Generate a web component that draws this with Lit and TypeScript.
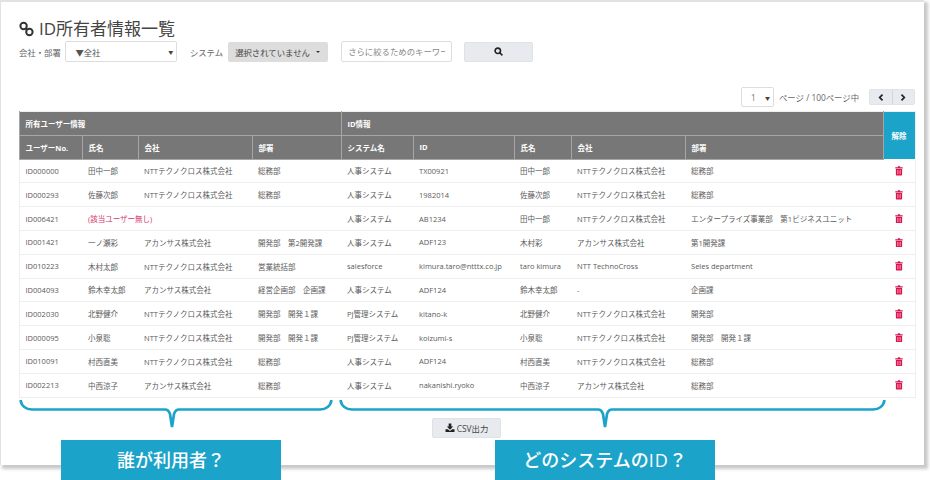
import { LitElement, html, css, svg } from "lit";
import { customElement } from "lit/decorators.js";

const NTT = "NTTテクノクロス株式会社";
const AK = "アカンサス株式会社";
const HR = "人事システム";
const PJ = "PJ管理システム";
type Row = string[];
const rows: Row[] = [
  ["ID000000", "田中一郎", NTT, "総務部", HR, "TX00921", "田中一郎", NTT, "総務部"],
  ["ID000293", "佐藤次郎", NTT, "総務部", HR, "1982014", "佐藤次郎", NTT, "総務部"],
  ["ID006421", "", "", "", HR, "AB1234", "田中一郎", NTT, "エンタープライズ事業部　第1ビジネスユニット"],
  ["ID001421", "一ノ瀬彩", AK, "開発部　第2開発課", HR, "ADF123", "木村彩", AK, "第1開発課"],
  ["ID010223", "木村太郎", NTT, "営業統括部", "salesforce", "kimura.taro@ntttx.co.jp", "taro kimura", "NTT TechnoCross", "Seles department"],
  ["ID004093", "鈴木幸太郎", AK, "経営企画部　企画課", HR, "ADF124", "鈴木幸太郎", "-", "企画課"],
  ["ID002030", "北野健介", NTT, "開発部　開発１課", PJ, "kitano-k", "北野健介", NTT, "開発部"],
  ["ID000095", "小泉聡", NTT, "開発部　開発１課", PJ, "koizumi-s", "小泉聡", NTT, "開発部　開発１課"],
  ["ID010091", "村西直美", NTT, "総務部", HR, "ADF124", "村西直美", NTT, "総務部"],
  ["ID002213", "中西涼子", AK, "総務部", HR, "nakanishi.ryoko", "中西涼子", AK, "総務部"],
];
const widths = [63, 56, 114, 89, 72, 101, 57, 114, 198, 32];

const trash = svg`<svg class="trash" viewBox="0 0 10 12" width="8" height="9.6"><path fill="#d9134f" d="M3.4 1.6 L3.9.3 H6.1 L6.6 1.6 H9.6 V3.1 H.4 V1.6 Z M1.1 3.7 H8.9 V11 Q8.9 11.8 8.1 11.8 H1.9 Q1.1 11.8 1.1 11 Z"/><path fill="#ee7fa0" d="M2.7 5h1.1v5.3H2.7zM4.45 5h1.1v5.3H4.45zM6.2 5h1.1v5.3H6.2z"/></svg>`;

const brace = (w: number, tip: number) => {
  const h = 31;
  return svg`<svg width=${w} height=${h} viewBox="0 0 ${w} ${h}"><path fill="none" stroke="#1ca3c9" stroke-width="2.7" d="M1.5 0 C2.5 6 7 9.5 13 9.5 H${tip - 7} C${tip - 4} 9.5 ${tip - 3} 11 ${tip - 2} 14 L${tip} 27 L${tip + 2} 14 C${tip + 3} 11 ${tip + 4} 9.5 ${tip + 7} 9.5 H${w - 13} C${w - 7} 9.5 ${w - 2.5} 6 ${w - 1.5} 0"/></svg>`;
};

@customElement("app-root")
export class AppRoot extends LitElement {
  static styles = css`
    :host { display: block; position: relative; width: 930px; height: 480px; overflow: hidden; background: #fff;
      font-family: "Open Sans", "Noto Sans CJK JP", sans-serif; color: #555; }
    .panel { box-sizing: border-box; width: 924px; height: 465px; background: #fff; border: solid #e2e2e2; border-width: 2px 0 0 1px;
      box-shadow: 3px 3px 3px 1px #c9c9c9; padding: 15px 9px 0 17.5px; display: flex; flex-direction: column; }
    h1 { margin: 0; height: 24px; padding-left: 0.5px; display: flex; align-items: center; gap: 5px; font-size: 17px; font-weight: 400; color: #444; line-height: 24px; }
    .filters { height: 21px; padding-left: 0.5px; display: flex; align-items: center; font-size: 8.4px; color: #666; }
    .sel { box-sizing: border-box; height: 21px; border: 1px solid #ddd; border-radius: 2px; background: #fff; display: flex; align-items: center; justify-content: space-between; }
    .sel.company { width: 112px; margin-left: 4.5px; padding: 0 3px 0 9px; color: #555; }
    .arrow { font-size: 5px; color: #444; }
    .sys-label { margin-left: 12.5px; }
    .multi { box-sizing: border-box; width: 100px; height: 20px; margin-left: 5px; background: #ddd; border: 0; border-radius: 2px; font: inherit; color: #444;
      display: flex; align-items: center; gap: 6px; padding: 0 0 0 7px; }
    .caret { width: 0; height: 0; border: 2.5px solid transparent; border-top-color: #333; border-bottom: 0; }
    input { box-sizing: border-box; width: 111px; height: 21px; margin-left: 13px; border: 1px solid #ddd; border-radius: 2px; padding: 0 6px; font: inherit; outline: none; background: #fff; }
    input::placeholder { color: #888; opacity: 1; }
    .search { box-sizing: border-box; width: 69px; height: 20px; margin-left: 12px; background: #e7eaee; border: 1px solid #dfe2e6; border-radius: 2px; display: flex; align-items: center; justify-content: center; padding: 0; }
    .pager { margin-top: 25px; height: 20px; display: flex; align-items: center; justify-content: flex-end; font-size: 8.4px; color: #666; }
    .sel.page { width: 33px; height: 20px; padding: 0 3px 0 9px; color: #777; }
    .pager-text { margin-left: 5px; width: 81px; }
    .nav { margin-left: 9px; width: 46px; height: 16px; display: flex; background: #e7eaee; border: 1px solid #dfe2e6; border-radius: 2px; box-sizing: border-box; }
    .nav span { flex: 1; display: flex; align-items: center; justify-content: center; }
    .nav span + span { border-left: 1px solid #d3d6da; }
    table { margin-top: 4px; width: 896px; table-layout: fixed; border-collapse: collapse; font-size: 7.5px; border: 1px solid #eee; }
    th { background: #777; color: #fff; font-weight: 700; text-align: left; padding: 0 0 0 6px; height: 22.8px; border: 1px solid #a6a6a6; border-top: 0; white-space: nowrap; }
    th.del { background: #1ca3c9; text-align: center; padding: 0; border: 0; }
    td { height: 22.8px; padding: 0 0 0 6px; border-bottom: 1px solid #eee; white-space: nowrap; color: #5a5a5a; overflow: visible; }
    td.none { color: #d6336c; padding-left: 6px; }
    td.act { padding: 0; text-align: center; }
    .trash { display: block; margin: 0 auto; }
    .csv { box-sizing: border-box; align-self: flex-start; margin: 20px 0 0 413.5px; width: 69px; height: 20px; background: #e7eaee; border: 1px solid #dfe2e6; border-radius: 2px;
      font: inherit; font-size: 8.4px; color: #444; display: flex; align-items: center; justify-content: center; gap: 2px; padding: 0; }
    .brace { position: absolute; top: 400px; height: 31px; }
    .callout { position: absolute; top: 440px; width: 220px; height: 40px; background: #1ca3c9; color: #fff; font-size: 18px; font-weight: 500; display: flex; align-items: center; justify-content: center; padding-bottom: 3px; box-sizing: border-box; }
    .wide { letter-spacing: 1px; }
  `;
  render() {
    return html`
      <div class="panel">
        <h1>
          <svg width="15" height="16" viewBox="0 0 15 16" fill="none" stroke="#333" stroke-width="2"><circle cx="4.6" cy="5" r="3.2"/><circle cx="10.4" cy="11" r="3.2"/><path d="M6.6 7.2 L8.4 8.8"/></svg>
          <span>ID所有者情報一覧</span>
        </h1>
        <div class="filters">
          <span>会社・部署</span>
          <div class="sel company"><span>▼全社</span><span class="arrow">▼</span></div>
          <span class="sys-label">システム</span>
          <button class="multi"><span>選択されていません</span><span class="caret"></span></button>
          <input placeholder="さらに絞るためのキーワード" />
          <button class="search"><svg width="9" height="9" viewBox="0 0 10 10" fill="none" stroke="#222" stroke-width="1.8"><circle cx="4.2" cy="4.2" r="3"/><path d="M6.4 6.4 L9.3 9.3"/></svg></button>
        </div>
        <div class="pager">
          <div class="sel page"><span>1</span><span class="arrow">▼</span></div>
          <span class="pager-text">ページ / 100ページ中</span>
          <div class="nav">
            <span><svg width="6" height="7" viewBox="0 0 6 7" fill="none" stroke="#222" stroke-width="1.7"><path d="M4.5 .7 L1.7 3.5 L4.5 6.3"/></svg></span>
            <span><svg width="6" height="7" viewBox="0 0 6 7" fill="none" stroke="#222" stroke-width="1.7"><path d="M1.5 .7 L4.3 3.5 L1.5 6.3"/></svg></span>
          </div>
        </div>
        <table>
          <colgroup>${widths.map((w) => html`<col style="width:${w}px" />`)}</colgroup>
          <thead>
            <tr><th colspan="4">所有ユーザー情報</th><th colspan="5">ID情報</th><th class="del" rowspan="2">解除</th></tr>
            <tr>${["ユーザーNo.", "氏名", "会社", "部署", "システム名", "ID", "氏名", "会社", "部署"].map((h) => html`<th>${h}</th>`)}</tr>
          </thead>
          <tbody>
            ${rows.map((r) => html`<tr>
              ${r[1] === ""
                ? html`<td>${r[0]}</td><td class="none" colspan="3">(該当ユーザー無し)</td>`
                : r.slice(0, 4).map((c) => html`<td>${c}</td>`)}
              ${r.slice(4).map((c) => html`<td>${c}</td>`)}
              <td class="act">${trash}</td>
            </tr>`)}
          </tbody>
        </table>
        <button class="csv">
          <svg width="10" height="9" viewBox="0 0 10 10" fill="#222"><path d="M3.5 .5h3v3.5h2L5 7.5 1.5 4h2z"/><path d="M0 7h2.6L5 8.8 7.4 7H10v3H0z"/></svg>
          <span>CSV出力</span>
        </button>
      </div>
      <div class="brace" style="left:19px">${brace(314, 153)}</div>
      <div class="brace" style="left:339px">${brace(547, 266)}</div>
      <div class="callout" style="left:61px">誰が利用者？</div>
      <div class="callout" style="left:495px"><span>どのシステムの<span class="wide">ID</span>？</span></div>
    `;
  }
}
